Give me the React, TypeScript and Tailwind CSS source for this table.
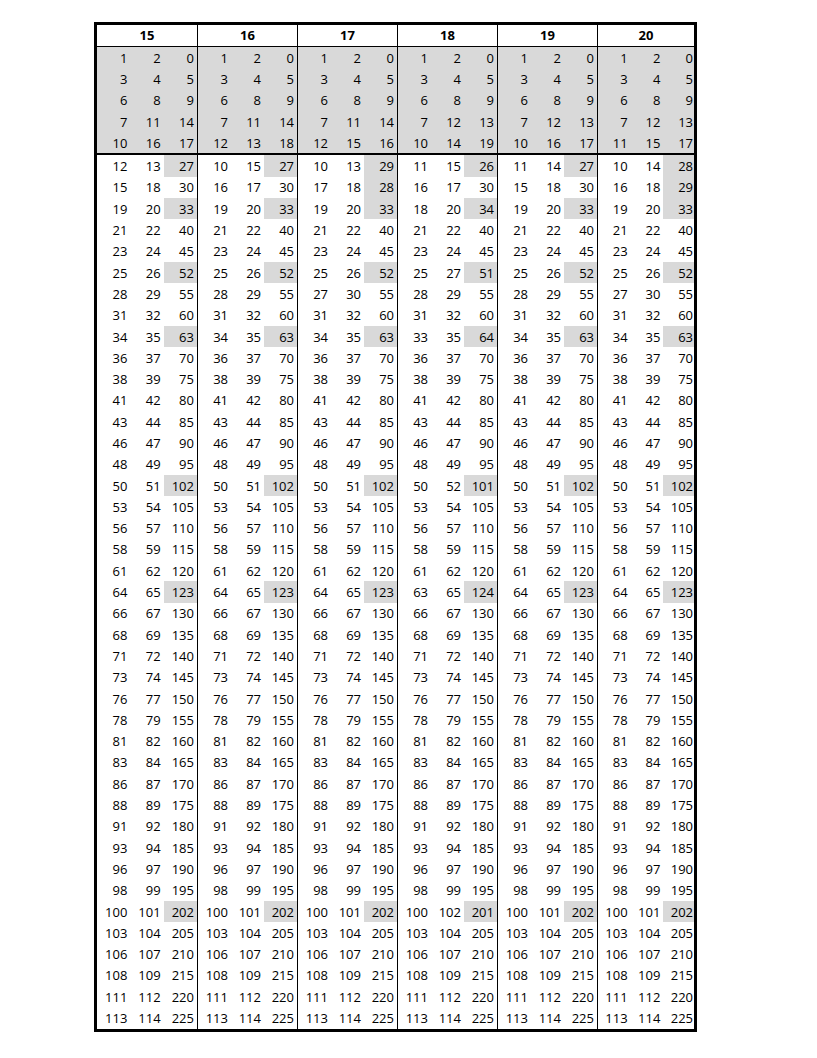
import React from 'react';

type Row = [number, number, number];

const tail: Row[] = [
  [36, 37, 70], [38, 39, 75], [41, 42, 80], [43, 44, 85], [46, 47, 90], [48, 49, 95],
  [50, 51, 102], [53, 54, 105], [56, 57, 110], [58, 59, 115], [61, 62, 120], [64, 65, 123],
  [66, 67, 130], [68, 69, 135], [71, 72, 140], [73, 74, 145], [76, 77, 150], [78, 79, 155],
  [81, 82, 160], [83, 84, 165], [86, 87, 170], [88, 89, 175], [91, 92, 180], [93, 94, 185],
  [96, 97, 190], [98, 99, 195], [100, 101, 202], [103, 104, 205], [106, 107, 210],
  [108, 109, 215], [111, 112, 220], [113, 114, 225],
];

const tail18: Row[] = tail.map((r) => {
  if (r[2] === 102) return [50, 52, 101];
  if (r[2] === 123) return [63, 65, 124];
  if (r[2] === 202) return [100, 102, 201];
  return r;
});

interface Group {
  title: number;
  top: Row[];
  body: Row[];
}

const topBase: Row[] = [[1, 2, 0], [3, 4, 5], [6, 8, 9]];

const groups: Group[] = [
  {
    title: 15,
    top: [...topBase, [7, 11, 14], [10, 16, 17]],
    body: [[12, 13, 27], [15, 18, 30], [19, 20, 33], [21, 22, 40], [23, 24, 45], [25, 26, 52], [28, 29, 55], [31, 32, 60], [34, 35, 63], ...tail],
  },
  {
    title: 16,
    top: [...topBase, [7, 11, 14], [12, 13, 18]],
    body: [[10, 15, 27], [16, 17, 30], [19, 20, 33], [21, 22, 40], [23, 24, 45], [25, 26, 52], [28, 29, 55], [31, 32, 60], [34, 35, 63], ...tail],
  },
  {
    title: 17,
    top: [...topBase, [7, 11, 14], [12, 15, 16]],
    body: [[10, 13, 29], [17, 18, 28], [19, 20, 33], [21, 22, 40], [23, 24, 45], [25, 26, 52], [27, 30, 55], [31, 32, 60], [34, 35, 63], ...tail],
  },
  {
    title: 18,
    top: [...topBase, [7, 12, 13], [10, 14, 19]],
    body: [[11, 15, 26], [16, 17, 30], [18, 20, 34], [21, 22, 40], [23, 24, 45], [25, 27, 51], [28, 29, 55], [31, 32, 60], [33, 35, 64], ...tail18],
  },
  {
    title: 19,
    top: [...topBase, [7, 12, 13], [10, 16, 17]],
    body: [[11, 14, 27], [15, 18, 30], [19, 20, 33], [21, 22, 40], [23, 24, 45], [25, 26, 52], [28, 29, 55], [31, 32, 60], [34, 35, 63], ...tail],
  },
  {
    title: 20,
    top: [...topBase, [7, 12, 13], [11, 15, 17]],
    body: [[10, 14, 28], [16, 18, 29], [19, 20, 33], [21, 22, 40], [23, 24, 45], [25, 26, 52], [27, 30, 55], [31, 32, 60], [34, 35, 63], ...tail],
  },
];

// widths of each group block (px), the separators are drawn as border-r
const groupWidth = ['w-[101px]', 'w-[100px]', 'w-[100px]', 'w-[100px]', 'w-[100px]', 'w-[96px]'];

function Cells({ row, shade, gi }: { row: Row; shade: boolean; gi: number }) {
  const last = gi === groups.length - 1;
  return (
    <div className={`flex h-[21.3px] ${groupWidth[gi]} ${last ? '' : 'border-r border-black'}`}>
      {row.map((v, i) => {
        const hl = shade || (i === 2 && v % 5 !== 0);
        return (
          <div
            key={i}
            className={`flex-1 flex items-center justify-end pt-[1px] ${last && i === 2 ? 'pr-[1px]' : 'pr-[3px]'} ${hl ? 'bg-[#d9d9d9]' : ''}`}
          >
            {v}
          </div>
        );
      })}
    </div>
  );
}

export default function App() {
  return (
    <div className="bg-white min-h-[1058px] pt-[22px] pl-[94px]" style={{ fontFamily: '"Open Sans", sans-serif' }}>
      <div className="w-[603px] border-[3px] border-black text-[13px] text-black leading-none">
        <div className="flex border-b border-black h-[22px]">
          {groups.map((g, gi) => (
            <div
              key={g.title}
              className={`${groupWidth[gi]} flex items-center justify-center font-bold ${gi === groups.length - 1 ? '' : 'border-r border-black'}`}
            >
              {g.title}
            </div>
          ))}
        </div>
        <div className="border-b-2 border-black">
          {[0, 1, 2, 3, 4].map((ri) => (
            <div key={ri} className="flex">
              {groups.map((g, gi) => (
                <Cells key={g.title} row={g.top[ri]} shade gi={gi} />
              ))}
            </div>
          ))}
        </div>
        <div>
          {groups[0].body.map((_, ri) => (
            <div key={ri} className="flex">
              {groups.map((g, gi) => (
                <Cells key={g.title} row={g.body[ri]} shade={false} gi={gi} />
              ))}
            </div>
          ))}
        </div>
      </div>
    </div>
  );
}
